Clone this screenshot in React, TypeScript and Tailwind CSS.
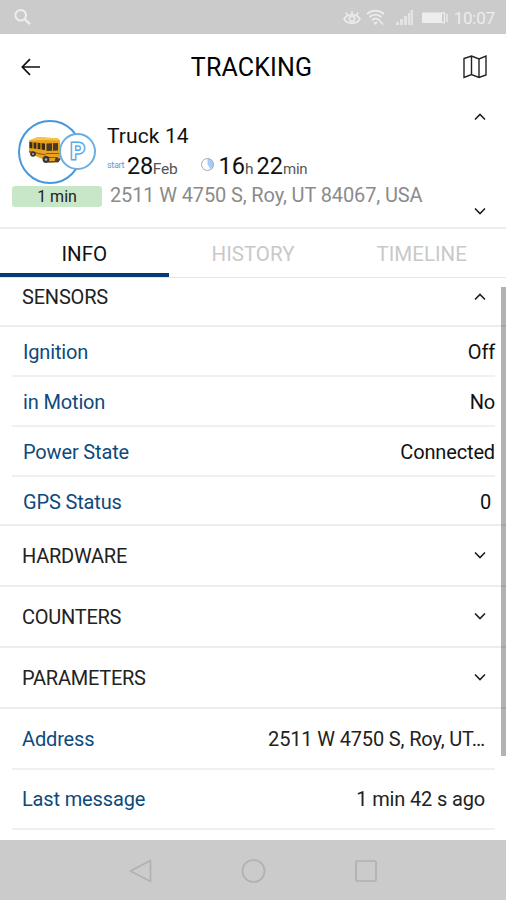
import { useState } from 'react';

interface Row {
  label: string;
  value: string;
}

const SENSORS: Row[] = [
  { label: 'Ignition', value: 'Off' },
  { label: 'in Motion', value: 'No' },
  { label: 'Power State', value: 'Connected' },
  { label: 'GPS Status', value: '0' },
];

const SECTIONS = ['HARDWARE', 'COUNTERS', 'PARAMETERS'];

const DETAILS: Row[] = [
  { label: 'Address', value: '2511 W 4750 S, Roy, UT…' },
  { label: 'Last message', value: '1 min 42 s ago' },
];

const TABS = ['INFO', 'HISTORY', 'TIMELINE'];

const Chevron = ({ up = false }: { up?: boolean }) => (
  <svg width="14" height="10" viewBox="0 0 14 10" fill="none" stroke="#222" strokeWidth="1.7">
    <path d={up ? 'M2 7.5 7 2.5 12 7.5' : 'M2 2.5 7 7.5 12 2.5'} />
  </svg>
);

const StatusBar = () => (
  <div className="flex h-[34px] shrink-0 items-center justify-between bg-[#cbcbcb] pr-[11px] pl-[13px] text-[#ededed]">
    <svg className="mt-px" width="20" height="20" viewBox="0 0 20 20" fill="none" stroke="currentColor">
      <circle cx="7.7" cy="7.2" r="5.3" strokeWidth="2" />
      <path d="m11.7 11.2 5.3 5" strokeWidth="2.4" />
    </svg>
    <div className="flex items-center pt-[2px]">
      <svg width="18" height="18" viewBox="0 0 18 18" fill="none" stroke="currentColor" strokeWidth="1.5">
        <path d="M1 10C4.5 4.3 13.5 4.3 17 10 13.5 15.7 4.5 15.7 1 10Z" />
        <circle cx="9" cy="9.8" r="2.6" />
        <path d="M9 5V2M4.5 6 2.8 3.5M13.5 6l1.7-2.5" />
      </svg>
      <svg className="ml-[5px]" width="19" height="18" viewBox="0 0 19 18" fill="none" stroke="currentColor" strokeWidth="1.7">
        <path d="M1 5C6 .5 13 .5 18 5M3.5 8C7 5 12 5 15.5 8M6 11c2-1.7 5-1.7 7 0" />
        <path d="m8 13 1.5 1.8L11 13M13 11l4 4.5" strokeWidth="1.5" />
      </svg>
      <svg className="ml-[10px]" width="19" height="18" viewBox="0 0 19 18" fill="currentColor">
        <path d="M1 16v-3h3v3zM5 16v-6h3v6zM9 16V7h3v9zM13 16V4h2v12zM15.5 16V1H18v15z" opacity=".7" />
      </svg>
      <svg className="ml-[7px]" width="28" height="18" viewBox="0 0 28 18" fill="currentColor">
        <path d="M1 3.500h20v10.500H1z" />
        <path d="M21 4h2.500v9.500H21M26 5v8" fill="none" stroke="currentColor" strokeWidth="1.3" />
      </svg>
      <span className="ml-[5px] text-[17px] leading-none tracking-[-0.2px]">10:07</span>
    </div>
  </div>
);

const Header = () => (
  <div className="flex h-[66px] shrink-0 items-center justify-between pr-[18px] pl-[19px]">
    <svg width="22" height="20" viewBox="0 0 22 20" fill="none" stroke="#111" strokeWidth="1.7">
      <path d="M21 10H3.5M11 2.2 3.3 10l7.7 7.8" />
    </svg>
    <h1 className="pt-px text-[25px] leading-none tracking-[0.15px]">TRACKING</h1>
    <svg width="26" height="26" viewBox="0 0 26 26" fill="none" stroke="#222" strokeWidth="1.4">
      <path d="M2 4.500 9.500 2 17 5l7-3v19l-7 2.500-7.500-3L2 23.500zM9.500 2v18.500M17 5v18.500" />
    </svg>
  </div>
);

const Bus = () => (
  <svg width="33" height="30" viewBox="0 0 33 30">
    <path d="M1 4.500 10 1l20 1.500 2 2v18l-3 3-8 .5L1 17z" fill="#e9a321" />
    <path d="M1 4.500 10 1l20 1.500 2 2-14-.5z" fill="#f7c543" />
    <path d="M1.500 6 17 7.500V14L1.500 12z" fill="#3d2c13" />
    <path d="M5 6v7M9 6.500v7M13 7v7" stroke="#e9a321" strokeWidth="1.2" />
    <path d="M18.500 7.500 30 7v7.500l-11.500.5z" fill="#493b24" />
    <path d="M24.500 7v8" stroke="#dc951d" strokeWidth="1" />
    <path d="M1 15.500 18 19M18 17.500h13M20 21.500h10" stroke="#8c5713" strokeWidth="1.1" />
    <path d="m18 23 3 3 9-.5 2-3" fill="none" stroke="#62431c" strokeWidth="1.6" />
    <circle cx="5" cy="18" r="2.8" fill="#38342f" />
    <circle cx="5" cy="18" r="1.1" fill="#aaa" />
    <circle cx="18" cy="23.5" r="3.4" fill="#38342f" />
    <circle cx="18" cy="23.5" r="1.3" fill="#aaa" />
    <circle cx="29" cy="24" r="2.2" fill="#454039" />
  </svg>
);

const VehicleBadge = () => (
  <div className="flex w-[90px] flex-col items-center">
    <div className="relative mr-[14px] flex size-[64px] items-center rounded-full border-2 border-[#4797dc] pl-[8px]">
      <div className="-mt-[3px]">
        <Bus />
      </div>
      <div className="absolute top-[11px] left-[39px] flex size-[37px] items-center justify-center rounded-full border-2 border-[#69aee5] bg-white">
        <span className="text-[22px] leading-none font-medium text-white [paint-order:stroke_fill] [-webkit-text-stroke:3px_#58a8e4]">P</span>
      </div>
    </div>
    <div className="mt-[2px] flex h-[21px] w-[90px] items-center justify-center rounded-[3px] bg-[#c8e7c8] pt-px text-[16px] leading-none text-[#222]">
      1 min
    </div>
  </div>
);

const Summary = () => (
  <div className="flex h-[129px] shrink-0 border-b-2 border-[#ededed] pt-[8px] pr-[19px] pl-[12px]">
    <div className="pt-[12px]">
      <VehicleBadge />
    </div>
    <div className="ml-[5px] flex flex-1 flex-col pt-[16px]">
      <div className="text-[21px] leading-[25px] tracking-[0.1px] text-[#111]">Truck 14</div>
      <div className="-mt-px flex h-[34px] items-baseline leading-[36px] text-[#111]">
        <span className="relative -top-[6px] w-[20px] text-[9px] leading-none tracking-[-0.3px] text-[#4da3d8]">start</span>
        <span className="text-[23.5px] tracking-[-0.3px]">28</span>
        <span className="text-[15.5px] tracking-[-0.2px] text-[#555]">Feb</span>
        <svg className="relative -top-[2px] mr-[4px] ml-[22px]" width="15" height="15" viewBox="0 0 15 15">
          <path d="M7.500 1.500a6 6 0 0 1 3.500 11L7.500 7.500z" fill="#a4cdf8" />
          <circle cx="7.5" cy="7.5" r="6" fill="none" stroke="#aaa" />
        </svg>
        <span className="text-[23.5px]">16</span>
        <span className="text-[15.5px] text-[#555]">h</span>
        <span className="ml-[3px] text-[23.5px]">22</span>
        <span className="text-[15px] tracking-[-0.2px] text-[#555]">min</span>
      </div>
      <div className="pt-px pl-[3px] text-[20px] leading-[24px] tracking-[-0.13px] whitespace-nowrap text-[#8b8b8b]">
        2511 W 4750 S, Roy, UT 84067, USA
      </div>
    </div>
    <div className="flex flex-col justify-between pt-[4px] pb-[11px]">
      <Chevron up />
      <Chevron />
    </div>
  </div>
);

const App = () => {
  const [activeTab, setActiveTab] = useState('INFO');

  return (
    <div className="flex h-[900px] w-[506px] flex-col overflow-hidden bg-white font-[Roboto,sans-serif] text-black">
      <StatusBar />
      <Header />
      <Summary />

      <div className="flex h-[49px] shrink-0 border-b border-[#e6e6e6]">
        {TABS.map(tab => (
          <button
            key={tab}
            onClick={() => setActiveTab(tab)}
            className={
              tab === activeTab
                ? 'flex-1 border-b-4 border-[#083b75] pt-[7px] text-[20.5px] leading-none text-[#111]'
                : 'flex-1 border-b-4 border-transparent pt-[7px] text-[20.5px] leading-none text-[#c9c9c9]'
            }
          >
            {tab}
          </button>
        ))}
      </div>

      <div className="relative h-[562px] shrink-0 overflow-hidden">
        <div className="flex h-[49px] items-start justify-between border-b-2 border-[#ededed] pt-[8px] pr-[19px] pl-[22px]">
          <span className="text-[20px] leading-[22px] tracking-[-0.2px] text-[#222]">SENSORS</span>
          <span className="pt-[6px]">
            <Chevron up />
          </span>
        </div>

        <div className="flex flex-col border-b-2 border-[#ededed]">
          {SENSORS.map(row => (
            <div
              key={row.label}
              className="mr-[11px] ml-[12px] flex h-[50px] items-center justify-between border-b-2 border-[#f0f0f0] pt-[2px] pl-[11px] text-[20px] tracking-[-0.15px] last:h-[47px] last:border-b-0"
            >
              <span className="text-[#0d4a7c]">{row.label}</span>
              <span className={row.value === '0' ? 'pr-[4px] text-[#111]' : 'text-[#111]'}>{row.value}</span>
            </div>
          ))}
        </div>

        {SECTIONS.map(name => (
          <div key={name} className="flex h-[61px] items-center justify-between border-b-2 border-[#ededed] pt-px pr-[19px] pl-[22px]">
            <span className="text-[20px] tracking-[-0.25px] text-[#222]">{name}</span>
            <span className="-mt-[2px]">
              <Chevron />
            </span>
          </div>
        ))}

        {DETAILS.map(row => (
          <div
            key={row.label}
            className="mr-[11px] ml-[12px] flex h-[61px] items-center justify-between border-b-2 border-[#f0f0f0] pr-[10px] pl-[10px] text-[20px] tracking-[-0.15px] nth-last-2:h-[60px]"
          >
            <span className="text-[#0d4a7c]">{row.label}</span>
            <span className="text-[#222]">{row.value}</span>
          </div>
        ))}

        {/* scroll indicator over the list */}
        <div className="absolute top-[9px] right-0 h-[469px] w-[5px] bg-black/30" />
      </div>

      <div className="flex flex-1 items-center justify-center gap-[88px] bg-[#cbcbcb] pt-[2px] text-[#b1b1b1]">
        <svg width="24" height="26" viewBox="0 0 24 26" fill="none" stroke="currentColor" strokeWidth="1.7">
          <path d="M22.500 2.500v21L2.500 13z" strokeLinejoin="round" />
        </svg>
        <svg width="26" height="26" viewBox="0 0 26 26" fill="none" stroke="currentColor" strokeWidth="1.7">
          <circle cx="13.5" cy="13" r="11" />
        </svg>
        <svg width="24" height="26" viewBox="0 0 24 26" fill="none" stroke="currentColor" strokeWidth="1.7">
          <rect x="2" y="3" width="20" height="20" rx="1" />
        </svg>
      </div>
    </div>
  );
};

export default App;
